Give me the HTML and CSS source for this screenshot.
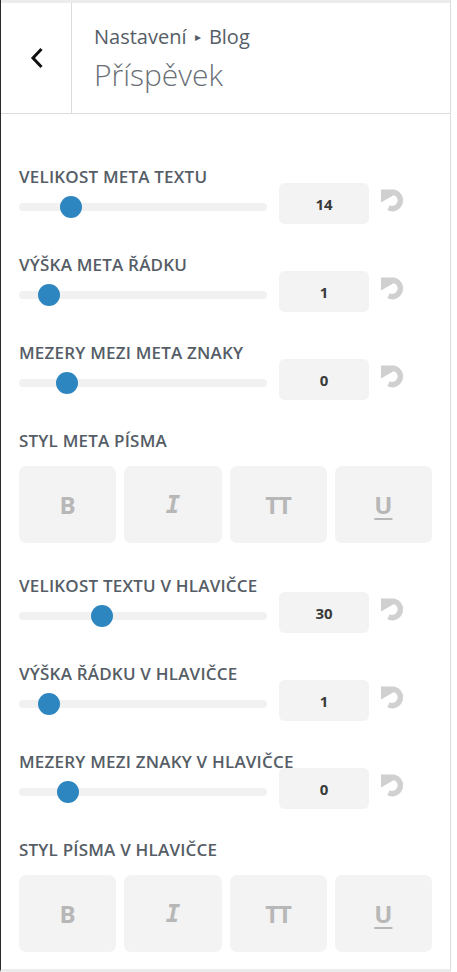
FILE: index.html
```html
<!DOCTYPE html>
<html lang="cs">
<head>
<meta charset="utf-8">
<title>Příspěvek</title>
<link rel="stylesheet" href="styles.css">
</head>
<body>
<div class="panel">
  <div class="topstrip"></div>
  <header class="section-header">
    <button class="back" aria-label="Zpět">
      <svg width="14" height="22" viewBox="0 0 14 22"><path d="M11.5 2 L3 11 L11.5 20" fill="none" stroke="#111" stroke-width="3" stroke-linecap="butt" stroke-linejoin="miter"/></svg>
    </button>
    <div class="titles">
      <div class="crumb">Nastavení <span class="tri">▸</span> Blog</div>
      <h3 class="title">Příspěvek</h3>
    </div>
  </header>

  <main class="controls">
    <div class="control">
      <div class="control-label">Velikost meta textu</div>
      <div class="slider-row">
        <div class="slider"><div class="track"></div><div class="thumb" style="left:41px"></div></div>
        <div class="num">14</div>
        <span class="reset"><svg viewBox="0 0 24 24"><path class="arc" d="M12.5 3.25 A8.25 8.25 0 1 1 7.5 18.8"/><path class="head" d="M0 0.5 L13 0.5 L13 6 L0 13.5 Z"/></svg></span>
      </div>
    </div>

    <div class="control">
      <div class="control-label">Výška meta řádku</div>
      <div class="slider-row">
        <div class="slider"><div class="track"></div><div class="thumb" style="left:19px"></div></div>
        <div class="num">1</div>
        <span class="reset"><svg viewBox="0 0 24 24"><path class="arc" d="M12.5 3.25 A8.25 8.25 0 1 1 7.5 18.8"/><path class="head" d="M0 0.5 L13 0.5 L13 6 L0 13.5 Z"/></svg></span>
      </div>
    </div>

    <div class="control">
      <div class="control-label">Mezery mezi meta znaky</div>
      <div class="slider-row">
        <div class="slider"><div class="track"></div><div class="thumb" style="left:37px"></div></div>
        <div class="num">0</div>
        <span class="reset"><svg viewBox="0 0 24 24"><path class="arc" d="M12.5 3.25 A8.25 8.25 0 1 1 7.5 18.8"/><path class="head" d="M0 0.5 L13 0.5 L13 6 L0 13.5 Z"/></svg></span>
      </div>
    </div>

    <div class="control control-style">
      <div class="control-label">Styl meta písma</div>
      <div class="style-buttons">
        <span class="sbtn b">B</span>
        <span class="sbtn i">I</span>
        <span class="sbtn tt">TT</span>
        <span class="sbtn u">U</span>
      </div>
    </div>

    <div class="control">
      <div class="control-label">Velikost textu v hlavičce</div>
      <div class="slider-row">
        <div class="slider"><div class="track"></div><div class="thumb" style="left:72px"></div></div>
        <div class="num">30</div>
        <span class="reset"><svg viewBox="0 0 24 24"><path class="arc" d="M12.5 3.25 A8.25 8.25 0 1 1 7.5 18.8"/><path class="head" d="M0 0.5 L13 0.5 L13 6 L0 13.5 Z"/></svg></span>
      </div>
    </div>

    <div class="control">
      <div class="control-label">Výška řádku v hlavičce</div>
      <div class="slider-row">
        <div class="slider"><div class="track"></div><div class="thumb" style="left:19px"></div></div>
        <div class="num">1</div>
        <span class="reset"><svg viewBox="0 0 24 24"><path class="arc" d="M12.5 3.25 A8.25 8.25 0 1 1 7.5 18.8"/><path class="head" d="M0 0.5 L13 0.5 L13 6 L0 13.5 Z"/></svg></span>
      </div>
    </div>

    <div class="control">
      <div class="control-label">Mezery mezi znaky v hlavičce</div>
      <div class="slider-row">
        <div class="slider"><div class="track"></div><div class="thumb" style="left:38px"></div></div>
        <div class="num">0</div>
        <span class="reset"><svg viewBox="0 0 24 24"><path class="arc" d="M12.5 3.25 A8.25 8.25 0 1 1 7.5 18.8"/><path class="head" d="M0 0.5 L13 0.5 L13 6 L0 13.5 Z"/></svg></span>
      </div>
    </div>

    <div class="control control-style">
      <div class="control-label">Styl písma v hlavičce</div>
      <div class="style-buttons">
        <span class="sbtn b">B</span>
        <span class="sbtn i">I</span>
        <span class="sbtn tt">TT</span>
        <span class="sbtn u">U</span>
      </div>
    </div>
  </main>
</div>
</body>
</html>
```

FILE: styles.css
```css
html, body {
  margin: 0;
  padding: 0;
  background: #ffffff;
}

body {
  font-family: "Open Sans", "Liberation Sans", sans-serif;
  color: #555d66;
}

.panel {
  box-sizing: border-box;
  width: 451px;
  height: 972px;
  border-left: 1px solid #2a2a2a;
  border-right: 1px solid #dcdcdc;
  border-bottom: 3px solid #ececec;
  background: #ffffff;
  overflow: hidden;
}

.topstrip {
  height: 3px;
  background: #ececec;
}

.section-header {
  display: flex;
  height: 110px;
  border-bottom: 1px solid #dcdcdc;
}

.back {
  flex: 0 0 71px;
  display: flex;
  align-items: center;
  justify-content: center;
  border: 0;
  border-right: 1px solid #dcdcdc;
  background: #ffffff;
  padding: 0;
  margin: 0;
}

.back svg {
  display: block;
  margin-left: 1px;
  margin-top: 0;
}

.titles {
  padding: 22px 0 0 22px;
}

.crumb {
  font-size: 20px;
  line-height: 24px;
  color: #555d66;
}

.tri {
  font-size: 12px;
  vertical-align: 3px;
  margin: 0 3px;
}

.title {
  margin: 8px 0 0 0;
  font-size: 30px;
  line-height: 36px;
  font-weight: 300;
  color: #6a6f75;
}

.controls {
  padding: 54px 18px 0 18px;
}

.control {
  margin-bottom: 32px;
}

.control-style {
  margin-bottom: 34px;
}

.control-label {
  font-size: 17px;
  line-height: 18px;
  font-weight: 600;
  letter-spacing: 0.2px;
  text-transform: uppercase;
  color: #555d66;
  white-space: nowrap;
}

.slider-row {
  display: flex;
  align-items: flex-start;
  margin-top: -3px;
  position: relative;
}

.slider {
  position: relative;
  flex: 0 0 248px;
  height: 22px;
  margin-top: 13px;
  display: flex;
  align-items: center;
}

.track {
  flex: 1;
  height: 8px;
  border-radius: 4px;
  background: #f1f1f1;
}

.thumb {
  position: absolute;
  top: 0;
  width: 22px;
  height: 22px;
  border-radius: 50%;
  background: #2e86c0;
}

.num {
  flex: 0 0 90px;
  height: 41px;
  margin-left: 12px;
  border-radius: 6px;
  background: #f3f3f3;
  display: flex;
  align-items: center;
  justify-content: center;
  font-size: 15px;
  font-weight: 700;
  color: #3a3a3a;
  position: relative;
  z-index: 1;
}

.reset {
  display: block;
  width: 24px;
  height: 24px;
  margin: 6px 0 0 12px;
}

.reset svg {
  display: block;
  width: 24px;
  height: 24px;
}

.reset .arc {
  fill: none;
  stroke: #d0d0d0;
  stroke-width: 5.5;
}

.reset .head {
  fill: #d0d0d0;
}

.style-buttons {
  display: grid;
  grid-template-columns: repeat(4, 1fr);
  gap: 8px;
  margin-top: 16px;
}

.sbtn {
  height: 77px;
  border-radius: 7px;
  background: #f3f3f3;
  display: flex;
  align-items: center;
  justify-content: center;
  color: #b7b7b7;
  font-size: 24px;
  font-weight: 700;
}

.sbtn.i {
  font-family: "DejaVu Sans Mono", monospace;
  font-style: italic;
  font-size: 24px;
}

.sbtn.tt {
  letter-spacing: -1px;
}

.sbtn.u {
  text-decoration: underline;
  text-decoration-thickness: 2px;
  text-underline-offset: 4px;
}
```
